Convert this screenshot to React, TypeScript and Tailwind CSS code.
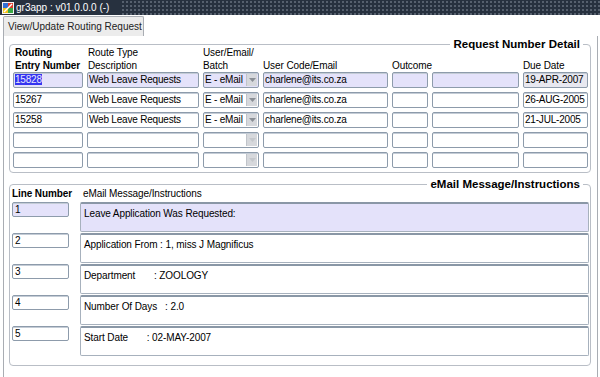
import React from "react";

const FONT = "font-['Liberation_Sans',Arial,sans-serif]";

type Cell = { w: string; text?: React.ReactNode; hl?: boolean; bg?: string; dd?: boolean };

function Field({ w, text, hl, bg, dd }: Cell) {
  const bgc = bg ? bg : hl ? "bg-[#e4e2fa]" : "bg-white";
  return (
    <div
      className={`${w} h-[16px] shrink-0 border border-[#8d9bab] rounded-[2px] ${bgc} shadow-[inset_0_1px_0_#c4ccd6] flex items-center overflow-hidden whitespace-nowrap text-[10px] leading-[14px] tracking-[-0.2px] text-black`}
    >
      <div className="flex-1 pl-[1px] overflow-hidden">{text}</div>
      {dd && (
        <div className="w-[11px] h-[12px] mr-[1px] bg-[#d6d8dc] border-l border-[#c0c4ca] flex items-center justify-center">
          <svg width="7" height="4" viewBox="0 0 7 4">
            <path d="M0 0 L7 0 L3.5 4 Z" fill={text ? "#8a8f96" : "#c4c7cc"} />
          </svg>
        </div>
      )}
    </div>
  );
}

const widths = ["w-[70px]", "w-[112px]", "w-[56px]", "w-[125px]", "w-[36px]", "w-[87px]", "w-[65px]"];

const rows: (string | null)[][] = [
  ["15828", "Web Leave Requests", "E - eMail", "charlene@its.co.za", "", "", "19-APR-2007"],
  ["15267", "Web Leave Requests", "E - eMail", "charlene@its.co.za", "", "", "26-AUG-2005"],
  ["15258", "Web Leave Requests", "E - eMail", "charlene@its.co.za", "", "", "21-JUL-2005"],
  ["", "", "", "", "", "", ""],
  ["", "", "", "", "", "", ""],
];

const lines = [
  ["1", "Leave Application Was Requested:"],
  ["2", "Application From : 1, miss J Magnificus"],
  ["3", "Department       : ZOOLOGY"],
  ["4", "Number Of Days   : 2.0"],
  ["5", "Start Date       : 02-MAY-2007"],
];

function AppIcon() {
  return (
    <svg width="12" height="12" viewBox="0 0 12 12">
      <rect x="0" y="0" width="12" height="12" fill="#f4f4f4" />
      <rect x="1" y="1" width="5" height="5" fill="#2f6fd6" />
      <rect x="6" y="1" width="5" height="5" fill="#e23a2a" />
      <rect x="1" y="6" width="5" height="5" fill="#f2c21b" />
      <rect x="6" y="6" width="5" height="5" fill="#3aa845" />
      <path d="M2 10 L10 2" stroke="#ffffff" strokeWidth="1.5" />
    </svg>
  );
}

export default function App() {
  return (
    <div className={`${FONT} w-[600px] h-[377px] bg-white overflow-hidden flex flex-col text-black`}>
      {/* title bar */}
      <div className="h-[15px] shrink-0 bg-[#27313f] flex items-center">
        <div className="ml-[2px] mr-[2px] flex items-center">
          <AppIcon />
        </div>
        <span className="text-[10px] leading-[13px] text-white whitespace-nowrap">gr3app : v01.0.0.0 (-)</span>
        <div className="flex-1 h-full ml-[12px] bg-[radial-gradient(circle,#56606e_0.8px,transparent_1.1px)] bg-[length:4px_4px]" />
      </div>
      {/* tab strip */}
      <div className="h-[21px] shrink-0 flex items-end">
        <div className="ml-[3px] w-[141px] h-[20px] border border-b-0 border-[#a9adb3] bg-[#ececec] rounded-t-[2px] flex items-center pl-[4px] text-[10px] leading-[13px] text-[#222] whitespace-nowrap">
          View/Update Routing Request
        </div>
      </div>
      {/* content */}
      <div className="flex-1 ml-[3px] mr-[2px] border-l border-r border-[#a9adb3] flex flex-col">
        {/* fieldset 1 */}
        <div className="relative ml-[5px] mt-[8px] w-[582px] h-[129px] border border-[#b9bec6] rounded-[4px] pl-[3px] pt-0">
          <div className="absolute right-[7px] top-[-7px] bg-white px-[3px] text-[11.5px] leading-[13px] font-bold whitespace-nowrap">
            Request Number Detail
          </div>
          <div className="h-[27px] flex gap-[4px] text-[10px] leading-[13px] tracking-[-0.1px]">
            <div className={`${widths[0]} shrink-0 flex flex-col justify-end font-bold pl-[2px] whitespace-nowrap`}>
              <span>Routing</span>
              <span>Entry Number</span>
            </div>
            <div className={`${widths[1]} shrink-0 flex flex-col justify-end pl-[1px] whitespace-nowrap`}>
              <span>Route Type</span>
              <span>Description</span>
            </div>
            <div className={`${widths[2]} shrink-0 flex flex-col justify-end whitespace-nowrap`}>
              <span>User/Email/</span>
              <span>Batch</span>
            </div>
            <div className={`${widths[3]} shrink-0 flex flex-col justify-end whitespace-nowrap`}>
              <span>User Code/Email</span>
            </div>
            <div className={`${widths[4]} shrink-0 flex flex-col justify-end whitespace-nowrap`}>
              <span>Outcome</span>
            </div>
            <div className={`${widths[5]} shrink-0`} />
            <div className={`${widths[6]} shrink-0 flex flex-col justify-end whitespace-nowrap`}>
              <span>Due Date</span>
            </div>
          </div>
          <div className="flex flex-col gap-[4px]">
            {rows.map((r, ri) => (
              <div key={ri} className="flex gap-[4px]">
                {r.map((c, ci) => {
                  let text: React.ReactNode = c;
                  if (ri === 0 && ci === 0)
                    text = <span className="bg-[#3434f0] text-[#e8e8ff]">{c}</span>;
                  return (
                    <Field
                      key={ci}
                      w={widths[ci]}
                      text={text || undefined}
                      hl={ri === 0 && ci !== 6}
                      bg={ri === 0 && ci === 6 ? "bg-[#e8e8f0]" : undefined}
                      dd={ci === 2}
                    />
                  );
                })}
              </div>
            ))}
          </div>
        </div>
        {/* fieldset 2 */}
        <div className="relative ml-[5px] mt-[11px] w-[582px] h-[182px] border border-[#b9bec6] rounded-[4px] pl-[2px]">
          <div className="absolute right-[7px] top-[-7px] bg-white px-[3px] text-[11.5px] leading-[13px] font-bold whitespace-nowrap">
            eMail Message/Instructions
          </div>
          <div className="h-[17px] flex items-center text-[10px] leading-[12px] tracking-[-0.1px] whitespace-nowrap">
            <span className="w-[71px] font-bold">Line Number</span>
            <span>eMail Message/Instructions</span>
          </div>
          <div className="flex flex-col">
            {lines.map(([n, t], i) => (
              <div key={i} className="h-[31px] flex">
                <div
                  className={`w-[57px] h-[15px] shrink-0 border border-[#8d9bab] rounded-[2px] ${
                    i === 0 ? "bg-[#e4e2fa]" : "bg-white"
                  } shadow-[inset_0_1px_0_#c4ccd6] text-[10px] leading-[13px] pl-[2px]`}
                >
                  {n}
                </div>
                <div
                  className={`ml-[11px] w-[509px] h-[30px] shrink-0 border border-[#a7b1bd] border-t-2 border-t-[#8a97a6] rounded-[2px] ${
                    i === 0 ? "bg-[#e4e2fa]" : "bg-white"
                  } text-[10px] leading-[13px] tracking-[-0.1px] pl-[3px] pt-[3px] whitespace-pre`}
                >
                  {t}
                </div>
              </div>
            ))}
          </div>
        </div>
      </div>
    </div>
  );
}
